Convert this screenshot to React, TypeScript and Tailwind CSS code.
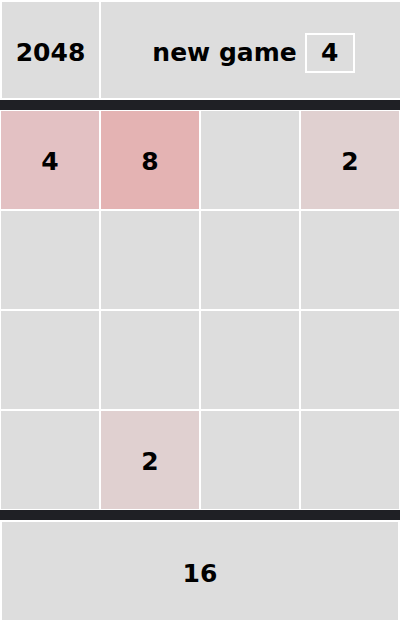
import React from 'react';

const tileColors: Record<number, string> = {
  0: 'bg-[#dddddd]',
  2: 'bg-[#e0d0d0]',
  4: 'bg-[#e3c1c3]',
  8: 'bg-[#e4b3b3]',
};

const board: number[] = [
  4, 8, 0, 2,
  0, 0, 0, 0,
  0, 0, 0, 0,
  0, 2, 0, 0,
];

const Divider = () => <div className="h-[10px] bg-[#1f2025]" />;

const App: React.FC = () => {
  return (
    <div
      className="w-[400px] h-[620px] overflow-hidden bg-white font-bold text-black text-[25px]"
      style={{ fontFamily: '"DejaVu Sans", Verdana, sans-serif' }}
    >
      <div className="flex gap-[2px] pl-[2px] pt-[2px] pb-[2px] h-[100px]">
        <div className="w-[97px] bg-[#dddddd] flex items-center justify-center pt-[6px]">2048</div>
        <div className="flex-1 bg-[#dddddd] flex items-center justify-center gap-[8px] pl-[6px] pt-[6px]">
          <span>new game</span>
          <span className="w-[50px] h-[40px] border-2 border-white flex items-center justify-center">4</span>
        </div>
      </div>

      <Divider />

      <div className="grid grid-cols-4 gap-[2px] p-[1px]">
        {board.map((v, i) => (
          <div key={i} className={`h-[98px] pt-[4px] flex items-center justify-center ${tileColors[v]}`}>
            {v > 0 ? v : ''}
          </div>
        ))}
      </div>

      <Divider />

      <div className="px-[2px] pt-[2px]">
        <div className="h-[98px] pt-[6px] bg-[#dddddd] flex items-center justify-center">16</div>
      </div>
    </div>
  );
};

export default App;
